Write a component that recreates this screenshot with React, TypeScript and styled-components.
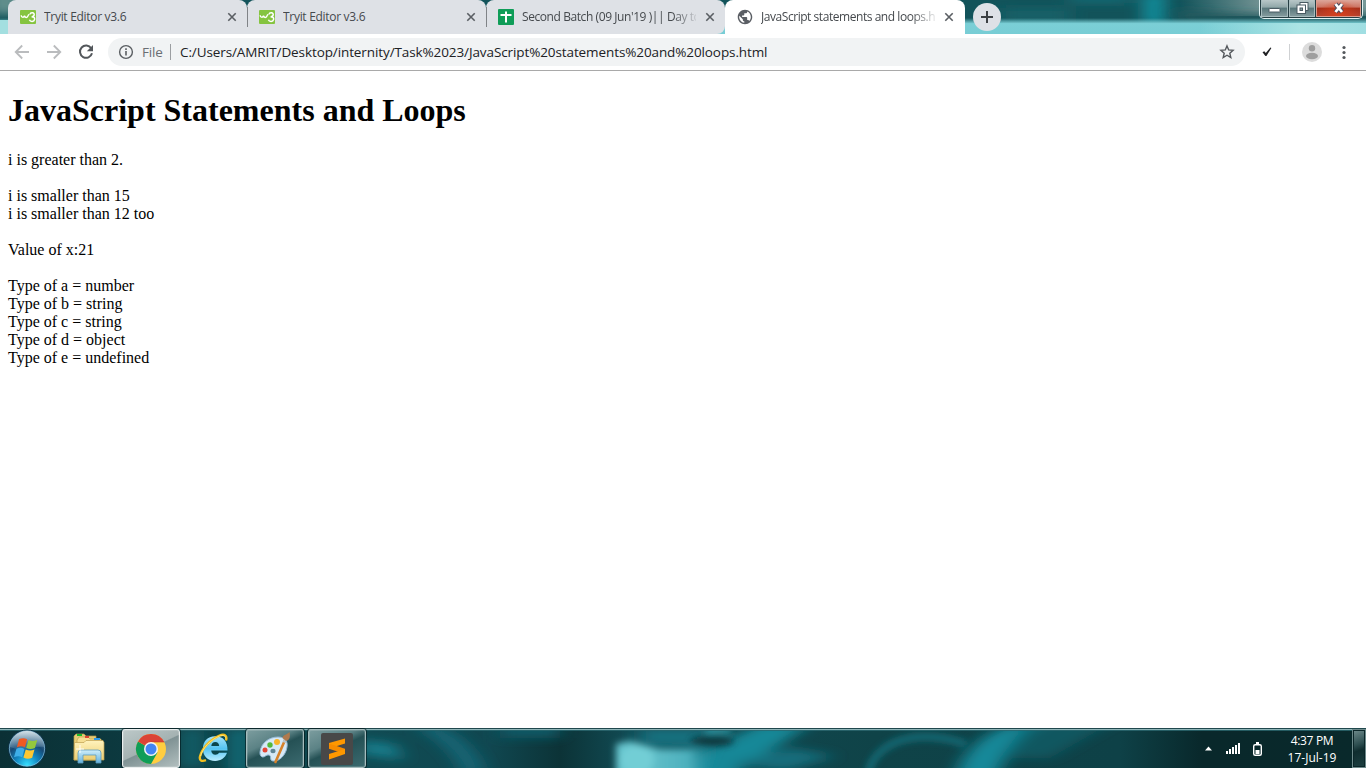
import React from 'react';
import styled, { createGlobalStyle, css } from 'styled-components';

const GlobalStyle = createGlobalStyle`
  * { box-sizing: border-box; }
  html, body { margin: 0; padding: 0; background: #fff; }
  body { overflow: hidden; }
  svg { display: block; flex: none; }
`;

const ui = css`
  font-family: 'Open Sans', 'Noto Sans', sans-serif;
`;

const Screen = styled.div`
  width: 1366px;
  height: 768px;
  display: flex;
  flex-direction: column;
  background: #fff;
  overflow: hidden;
`;

/* ---------- title bar and tabs ---------- */

const TitleBar = styled.header`
  position: relative;
  height: 34px;
  display: flex;
  align-items: flex-start;
  padding-left: 8px;
  background: #17585e;
  overflow: hidden;
`;

const Wallpaper = styled.svg`
  position: absolute;
  left: 0;
  top: 0;
`;

const Tab = styled.div<{ $active?: boolean; $last?: boolean; $line?: boolean }>`
  position: relative;
  width: 239px;
  height: 34px;
  display: flex;
  align-items: center;
  padding: 0 11px 0 12px;
  background: ${(p) => (p.$active ? '#fff' : '#dee1e6')};
  border-radius: ${(p) => (p.$last ? '8px 8px 8px 0' : '8px 8px 0 0')};
  ${(p) => p.$active && 'width: 240px; padding-right: 12px;'}
  ${(p) =>
    p.$line &&
    css`
      &::after {
        content: '';
        position: absolute;
        right: -1px;
        top: 7px;
        width: 1px;
        height: 20px;
        background: #808387;
        z-index: 1;
      }
    `}
`;

const TabUnder = styled.div<{ $c: string }>`
  display: flex;
  background: linear-gradient(transparent 50%, ${(p) => p.$c} 50%);
  position: relative;
`;

const TabTitle = styled.span<{ $fade?: boolean; $spacing: number }>`
  ${ui}
  flex: none;
  width: 174px;
  margin-left: 8px;
  margin-right: 9px;
  height: 18px;
  line-height: 18px;
  font-size: 12px;
  letter-spacing: ${(p) => p.$spacing}px;
  color: #45494d;
  white-space: nowrap;
  overflow: hidden;
  ${(p) => p.$fade && 'mask-image: linear-gradient(90deg, #000 150px, transparent 178px);'}
`;

const NewTab = styled.div`
  position: relative;
  width: 28px;
  height: 28px;
  margin: 3px 0 0 8px;
  border-radius: 50%;
  background: #dee1e6;
  display: grid;
  place-items: center;
`;

const WindowControls = styled.div`
  position: relative;
  display: flex;
  height: 19px;
  margin-left: auto;
  margin-right: 3px;
  border: 1px solid #dff1f2;
  border-top: 0;
  border-radius: 0 0 5px 5px;
  background: #263e43;
  padding: 0 1px 1px;
  gap: 1px;
`;

const Control = styled.div<{ $w: number; $close?: boolean }>`
  width: ${(p) => p.$w}px;
  display: grid;
  place-items: center;
  border: 1px solid ${(p) => (p.$close ? '#dc9b8d' : '#a7bcbe')};
  border-top: 0;
  background: ${(p) =>
    p.$close
      ? 'radial-gradient(ellipse at 50% 100%, #d8401c 0, transparent 70%), linear-gradient(#dda69a 0, #cc7463 45%, #a92f19 50%, #b5442f 100%)'
      : 'linear-gradient(#b8c7c8 0, #91a7a9 45%, #58767a 50%, #82999c 100%)'};
`;

/* ---------- toolbar ---------- */

const Toolbar = styled.div`
  height: 37px;
  flex: none;
  display: flex;
  align-items: center;
  border-bottom: 1px solid #a9a9a9;
  padding: 0 12px 0 12px;
  background: #fff;
`;

const NavGroup = styled.div`
  display: flex;
  gap: 12px;
  width: 96px;
`;

const AddressBar = styled.div`
  ${ui}
  flex: none;
  width: 1137px;
  height: 28px;
  border-radius: 14px;
  background: #f1f3f4;
  display: flex;
  align-items: center;
  padding: 0 8px 0 10px;
  line-height: 20px;
  white-space: nowrap;
`;

const Scheme = styled.span`
  width: 28px;
  margin-left: 8px;
  color: #6a6e73;
  font-size: 13.5px;
  letter-spacing: -0.2px;
`;

const Divider = styled.span<{ $c: string; $l: number; $r: number }>`
  width: 1px;
  height: 16px;
  margin: 0 ${(p) => p.$r}px 0 ${(p) => p.$l}px;
  background: ${(p) => p.$c};
`;

const Url = styled.span`
  flex: 1;
  color: #202124;
  font-size: 13.5px;
  letter-spacing: -0.1px;
`;

const Avatar = styled.div`
  width: 20px;
  height: 20px;
  border-radius: 50%;
  background: #dcdcdc;
  overflow: hidden;
`;

/* ---------- document ---------- */

const Page = styled.main`
  flex: 1;
  padding: 0 8px;
  font-family: 'Liberation Serif', 'Times New Roman', serif;
  font-size: 16px;
  line-height: 18px;
  color: #000;
`;

const Heading = styled.h1`
  margin: 21px 0 23px;
  font-size: 32px;
  line-height: 36px;
  font-weight: bold;
`;

const Paragraph = styled.div`
  margin-bottom: 18px;
`;

const Line = styled.div`
  height: 18px;
  white-space: nowrap;
`;

/* ---------- taskbar ---------- */

const Taskbar = styled.footer`
  position: relative;
  height: 40px;
  flex: none;
  display: flex;
  align-items: center;
  overflow: hidden;
  background: #0f4449;
`;

const Slot = styled.div<{ $w: number }>`
  position: relative;
  width: ${(p) => p.$w}px;
  height: 40px;
  display: grid;
  place-items: center;
`;

const TaskButton = styled.div<{ $active?: boolean }>`
  position: relative;
  width: 58px;
  height: 39px;
  margin: 1px 4px 0 0;
  display: grid;
  place-items: center;
  border-radius: 3px;
  border: 1px solid ${(p) => (p.$active ? '#e9eeee' : '#a5bcbd')};
  box-shadow: inset 0 0 0 1px rgba(255, 255, 255, 0.15), 0 0 0 1px rgba(0, 20, 24, 0.6);
  background: ${(p) =>
    p.$active
      ? 'linear-gradient(155deg, #bcc8c8 0, #a4b2b2 48%, #7f9294 50%, #b2bfbf 100%)'
      : 'linear-gradient(155deg, #7c9d9f 0, #5b8285 35%, #255155 50%, #3c6b70 100%)'};
`;

const Tray = styled.div`
  position: relative;
  margin-left: auto;
  display: flex;
  align-items: center;
  height: 40px;
`;

const TrayIcons = styled.svg`
  margin-right: 10px;
`;

const Clock = styled.div`
  ${ui}
  width: 80px;
  margin-top: 2px;
  text-align: center;
  color: #fff;
  font-size: 12px;
  line-height: 17px;
  letter-spacing: -0.35px;
`;

const LongDate = styled.div`
  letter-spacing: 0;
`;

const ShowDesktop = styled.div`
  width: 14px;
  height: 39px;
  margin-top: 1px;
  border: 1px solid #6e8a8b;
  box-shadow: inset 0 0 0 1px #0b2629;
  background: linear-gradient(160deg, #6f8b8c 0, #2c4d4f 40%, #102d2f 55%, #1d3f41 100%);
`;

/* ---------- icons ---------- */

const CloseX = () => (
  <svg width="10" height="10" viewBox="0 0 10 10">
    <path d="M1.300 1.300l7.400 7.400M8.700 1.300l-7.400 7.400" stroke="#5a5e63" strokeWidth="1.600" />
  </svg>
);

const W3Icon = () => (
  <svg width="16" height="14" viewBox="0 0 16 14">
    <rect width="16" height="14" rx="1" fill="#85c440" />
    <path d="M1.200 5.200c0 2.400 2.500 2.700 3.300.5.300 2.300 3 2.300 3.500.2.300-1.200.7-1.400 1.400-1.600" fill="none" stroke="#fff" strokeWidth="1.400" />
    <path d="M10 4.400c.6-2.500 4.700-2 4.200.6-.2 1.100-1.200 1.700-2.600 1.900 2.200-.4 3.300.8 3 2.500-.5 2.600-4.300 2.600-5.200.3" fill="none" stroke="#fff" strokeWidth="1.500" />
  </svg>
);

const SheetsIcon = () => (
  <svg width="16" height="16" viewBox="0 0 16 16">
    <rect width="16" height="16" rx="1" fill="#0f9d58" />
    <path d="M8 2.500v11M2.500 6h11" stroke="#fff" strokeWidth="2" />
  </svg>
);

const GlobeIcon = () => (
  <svg width="16" height="16" viewBox="1 1 22 22">
    <path
      fill="#5a5e64"
      d="M12 2C6.480 2 2 6.480 2 12s4.480 10 10 10 10-4.480 10-10S17.520 2 12 2zm-1 17.930c-3.950-.49-7-3.850-7-7.930 0-.62.08-1.210.21-1.790L9 15v1c0 1.100.9 2 2 2v1.930zm6.900-2.540c-.26-.81-1-1.390-1.900-1.390h-1v-3c0-.55-.45-1-1-1H8v-2h2c.55 0 1-.45 1-1V7h2c1.100 0 2-.9 2-2v-.41c2.930 1.190 5 4.060 5 7.410 0 2.080-.8 3.970-2.100 5.390z"
    />
  </svg>
);

const Arrow = ({ flip }: { flip?: boolean }) => (
  <svg width="20" height="20" viewBox="0 0 20 20">
    <g transform={flip ? 'translate(20 0) scale(-1 1)' : undefined} fill="none" stroke="#babcbe" strokeWidth="1.800">
      <path d="M17 10H4M10.200 3.500L3.700 10l6.500 6.500" />
    </g>
  </svg>
);

const Reload = () => (
  <svg width="20" height="20" viewBox="0 0 20 20">
    <path d="M15.200 6.300A6.100 6.100 0 1 0 16 11.300" fill="none" stroke="#53575b" strokeWidth="2" />
    <path d="M17 3v6.200h-6.200z" fill="#53575b" />
  </svg>
);

const InfoIcon = () => (
  <svg width="16" height="16" viewBox="0 0 16 16">
    <circle cx="8" cy="8" r="6.400" fill="none" stroke="#5a5e62" strokeWidth="1.400" />
    <path d="M8 7v4.500M8 4.300v1.600" stroke="#5a5e62" strokeWidth="1.600" />
  </svg>
);

const Star = () => (
  <svg width="20" height="20" viewBox="0 0 20 20">
    <path d="M10 3.900l1.700 4 4.400.4-3.300 2.900 1 4.300-3.800-2.300-3.800 2.300 1-4.300-3.300-2.900 4.400-.4z" fill="none" stroke="#54585c" strokeWidth="1.400" />
  </svg>
);

const Check = () => (
  <svg width="12" height="12" viewBox="0 0 12 12">
    <path d="M1.500 6.200l1.800-.9 1.500 1.800L9.400 1.600l1 .5L5.400 10h-1z" fill="#202124" />
  </svg>
);

const StartOrb = () => (
  <svg width="40" height="40" viewBox="0 0 40 40">
    <defs>
      <radialGradient id="orb" cx=".5" cy=".95" r=".9">
        <stop offset="0" stopColor="#36e0ff" />
        <stop offset=".35" stopColor="#1287c2" />
        <stop offset=".65" stopColor="#174a76" />
        <stop offset="1" stopColor="#7895a8" />
      </radialGradient>
      <linearGradient id="gloss" x1="0" y1="0" x2="0" y2="1">
        <stop offset="0" stopColor="#e3edf2" stopOpacity=".85" />
        <stop offset="1" stopColor="#7ca1b8" stopOpacity=".25" />
      </linearGradient>
    </defs>
    <circle cx="20" cy="20.500" r="18.500" fill="url(#orb)" stroke="#0b3046" />
    <circle cx="20" cy="20.500" r="17.600" fill="none" stroke="#84bfd8" strokeOpacity=".7" />
    <path d="M3 19a17 16 0 0 1 34 0c-9-2-22 5-34 0z" fill="url(#gloss)" />
    <g transform="translate(-2.300 -2.500) scale(1.150)">
      <path d="M12.500 11.800c3-1.300 5-.9 7 .2l-1.900 7c-2.200-1.100-4.300-1.300-7 0z" fill="#f05a22" />
      <path d="M20.700 12.600c2.500 1.200 5 1.100 7.600-.1l-2 7c-2.800 1.200-5 1.200-7.600.1z" fill="#94c83d" />
      <path d="M10.200 20.300c2.700-1.300 4.800-1 7 .1l-2 7.200c-2.400-1.300-4.500-1.200-7.100 0z" fill="#3eaee8" />
      <path d="M18.300 20.900c2.600 1.200 5 1.100 7.600 0l-2 7.200c-2.700 1.200-5.200 1.100-7.600-.2z" fill="#fdc733" />
    </g>
  </svg>
);

const ExplorerIcon = () => (
  <svg width="34" height="32" viewBox="0 0 34 32">
    <defs>
      <linearGradient id="fold" x1="0" y1="0" x2="0" y2="1">
        <stop offset="0" stopColor="#fff3bd" />
        <stop offset="1" stopColor="#ecce72" />
      </linearGradient>
      <linearGradient id="stand" x1="0" y1="0" x2="0" y2="1">
        <stop offset="0" stopColor="#d1effa" />
        <stop offset="1" stopColor="#62b0dc" />
      </linearGradient>
    </defs>
    <path d="M3 28V4l2-2h8l2 2h10v24z" fill="#e7cc77" stroke="#b99844" strokeWidth=".7" />
    <path d="M6 28V8l2-3h9l2 2h11v21z" fill="#f6df93" stroke="#c3a34f" strokeWidth=".7" />
    <path d="M3 28l.5-17.500H13l2-2h17l1 2V28z" fill="url(#fold)" stroke="#bea152" strokeWidth=".7" />
    <rect x="6" y="2" width="5" height="2" fill="#19b929" />
    <rect x="14" y="4" width="4" height="2" fill="#dc4632" />
    <rect x="23" y="6" width="6" height="2" fill="#2f99e8" />
    <path d="M7 31V21q0-3 3-3h17q3 0 3 3v10h-5v-8H12v8z" fill="url(#stand)" stroke="#5e9cbe" strokeWidth=".8" />
    <path d="M9 13v8M5 17h8" stroke="#fff" strokeWidth=".9" />
  </svg>
);

const ChromeIcon = () => (
  <svg width="32" height="32" viewBox="0 0 32 32">
    <circle cx="16" cy="16" r="15" fill="#ffcd40" />
    <path d="M16 16L3 8.500A15 15 0 0 0 16 31l6.500-11.500z" fill="#0f9d58" />
    <path d="M16 16L3 8.500A15 15 0 0 1 29.200 9H16z" fill="#db4437" />
    <path d="M16 9h13.200" stroke="#c13a2e" strokeWidth=".6" />
    <circle cx="16" cy="16" r="7" fill="#f3f3f3" />
    <circle cx="16" cy="16" r="5.500" fill="#4285f4" />
  </svg>
);

const IeIcon = () => (
  <svg width="34" height="34" viewBox="1 1 34 34">
    <defs>
      <linearGradient id="ie" x1="0" y1="0" x2="0" y2="1">
        <stop offset="0" stopColor="#a5e3fb" />
        <stop offset=".5" stopColor="#55c4f2" />
        <stop offset="1" stopColor="#b8ecff" />
      </linearGradient>
    </defs>
    <path d="M30.500 20.500H14.200c.2 2.600 1.700 4.200 4.200 4.200 1.700 0 2.900-.6 3.700-1.900h7.900c-1.700 5.200-6.200 8.100-11.800 8.100-7.700 0-12.300-5-12.300-12.200S10.600 6.300 18 6.300c8.300 0 12.800 5.200 12.500 14.200zM14.300 15.900h7.900c-.2-2.500-1.600-3.900-3.900-3.900s-3.700 1.400-4 3.900z" fill="url(#ie)" />
    <path d="M29 10.500c1.500-5-1.500-7-6.500-5C13 9.500 5 18.500 3 26.500c-.9 4 1.500 5.300 6 3.700" fill="none" stroke="#f3bf1e" strokeWidth="2.400" />
    <path d="M28.700 8.500c.2-3-2.700-3.500-5.900-2.500C14 9.500 5.500 18 3.600 26" fill="none" stroke="#ffe784" strokeWidth=".9" />
  </svg>
);

const PaintIcon = () => (
  <svg width="34" height="34" viewBox="1 1 34 34">
    <path d="M3 21C4 12 12 6 21 6c7 0 10 4 9 10-1 8-8 15-14 14-4-.5-1-5-4-6-3-.7-4 2.500-6.500 2-2-.4-2.800-2.500-2.500-5z" fill="#d6e9f6" stroke="#93b8d4" />
    <ellipse cx="16" cy="20" rx="2.600" ry="2.200" fill="#5f8595" />
    <circle cx="8" cy="19" r="2.500" fill="#e34635" />
    <circle cx="13" cy="14" r="2.700" fill="#54b83c" />
    <circle cx="20" cy="11" r="3" fill="#f8b42b" />
    <path d="M28 9L18.500 31" stroke="#d6822c" strokeWidth="2.600" strokeLinecap="round" />
    <path d="M28.400 8L27 11.500" stroke="#b9c4cb" strokeWidth="3" />
    <path d="M25.500 7c0-3 4-3 7-6 .8 4 .8 8-3.500 9z" fill="#b07a4e" />
  </svg>
);

const SublimeIcon = () => (
  <svg width="32" height="32" viewBox="0 0 32 32">
    <rect width="32" height="32" rx="2" fill="#484848" />
    <path d="M8 10l16-4.500v5L8 15.500z" fill="#ff9800" />
    <path d="M8 10.500l16 5.300v5.200L8 15.800z" fill="#f78c00" />
    <path d="M8 21l16-5v5L8 26.500z" fill="#ff9800" />
  </svg>
);

const TitleWallpaper = () => (
  <Wallpaper width="1366" height="34" viewBox="0 0 1366 34">
    <defs>
      <filter id="tb" filterUnits="userSpaceOnUse" x="-60" y="-60" width="1486" height="150">
        <feGaussianBlur stdDeviation="9 4" />
      </filter>
      <linearGradient id="band" x1="0" y1="0" x2="0" y2="1">
        <stop offset="0" stopColor="#7bcfd6" stopOpacity="0" />
        <stop offset=".35" stopColor="#7bcfd6" />
        <stop offset="1" stopColor="#78cdd5" />
      </linearGradient>
      <linearGradient id="pale" x1="0" y1="0" x2="1" y2="0">
        <stop offset="0" stopColor="#b0e6e6" stopOpacity="0" />
        <stop offset=".6" stopColor="#b0e6e6" stopOpacity=".9" />
        <stop offset="1" stopColor="#a0dee2" />
      </linearGradient>
      <linearGradient id="grey" x1="0" y1="0" x2="1" y2="0">
        <stop offset="0" stopColor="#86a09f" stopOpacity="0" />
        <stop offset=".45" stopColor="#86a09f" />
        <stop offset="1" stopColor="#8aa5a3" />
      </linearGradient>
    </defs>
    <rect width="1366" height="34" fill="#12535a" />
    <g filter="url(#tb)">
      <rect x="1000" y="8" width="70" height="14" fill="#136068" />
      <rect x="1144" y="-6" width="20" height="30" fill="#1792a0" />
      <rect x="1070" y="-6" width="60" height="9" fill="#136b75" />
      <rect x="-10" y="-10" width="30" height="24" fill="#669390" />
    </g>
    <rect x="1180" width="186" height="16" fill="url(#grey)" opacity=".85" />
    <g filter="url(#tb)">
      <path d="M1170 10l70 4h160v10h-210z" fill="#24595d" />
    </g>
    <rect y="18" width="1366" height="16" fill="url(#band)" />
    <rect x="1200" y="23" width="166" height="11" fill="url(#pale)" />
    <rect y="20" width="8" height="14" fill="#a3dfe0" />
  </Wallpaper>
);

const TaskWallpaper = () => (
  <Wallpaper width="1366" height="40" viewBox="0 0 1366 40">
    <defs>
      <filter id="b1" filterUnits="userSpaceOnUse" x="-50" y="-50" width="1466" height="140">
        <feGaussianBlur stdDeviation="9 5" />
      </filter>
      <filter id="b2" filterUnits="userSpaceOnUse" x="-50" y="-50" width="1466" height="140">
        <feGaussianBlur stdDeviation="3.500" />
      </filter>
      <linearGradient id="glow" x1="0" y1="0" x2="1" y2="0">
        <stop offset="0" stopColor="#66c5ce" />
        <stop offset=".35" stopColor="#60bec8" />
        <stop offset=".7" stopColor="#4cb0bd" />
        <stop offset="1" stopColor="#138898" stopOpacity="0" />
      </linearGradient>
      <linearGradient id="base" x1="0" y1="0" x2="1" y2="0">
        <stop offset="0" stopColor="#0b3035" />
        <stop offset=".1" stopColor="#0c3a40" />
        <stop offset=".27" stopColor="#104b53" />
        <stop offset=".36" stopColor="#104750" />
        <stop offset=".41" stopColor="#0c3337" />
        <stop offset=".46" stopColor="#114b54" />
        <stop offset=".64" stopColor="#0f4348" />
        <stop offset=".82" stopColor="#0e4147" />
        <stop offset=".88" stopColor="#09282b" />
        <stop offset="1" stopColor="#09292b" />
      </linearGradient>
    </defs>
    <rect width="1366" height="40" fill="url(#base)" />
    <g filter="url(#b1)">
      <rect x="180" y="0" width="24" height="40" fill="#116b75" opacity=".7" />
      <rect x="228" y="0" width="22" height="45" fill="#12737f" opacity=".8" />
      <path d="M360 12l35 4 8 16-43-6z" fill="#177b8a" />
      <path d="M430-5c28 8 48 27 55 50h-24c-4-18-22-32-44-46z" fill="#126676" />
      <path d="M500-8h60v18h-60z" fill="#105865" />
      <path d="M640 0h80l-15 20-65-2z" fill="#12707e" />
      <path d="M690 30l70-34h50l-80 54h-60z" fill="#138898" />
      <path d="M730 36l60-16 45 8-50 15z" fill="#126d7b" />
      <path d="M955 50c8-30 35-50 65-55h30c-22 8-43 28-55 55z" fill="#14899a" />
      <path d="M1030-10h90l-70 40h-50z" fill="#10606b" opacity=".7" />
    </g>
    <g filter="url(#b2)">
      <path d="M616 16l14-3 30 8 60 0-16 28h-88z" fill="url(#glow)" />
      <ellipse cx="637" cy="32" rx="17" ry="15" fill="#72ced5" />
      <ellipse cx="712" cy="13" rx="22" ry="5" fill="#0b373c" />
      <path d="M868 45c7-29 44-47 98-29" fill="none" stroke="#13717e" strokeWidth="6" />
      <path d="M706 2h25" stroke="#39a8b5" strokeWidth="5" />
    </g>
    <rect width="1366" height="1" fill="#20484d" />
    <rect y="1" width="1366" height="1" fill="#8eb5b8" />
    <rect y="2" width="1366" height="1" fill="#2c686f" opacity=".8" />
  </Wallpaper>
);

const tabs = [
  { title: 'Tryit Editor v3.6', icon: <W3Icon />, line: true, spacing: -0.3 },
  { title: 'Tryit Editor v3.6', icon: <W3Icon />, line: true, spacing: -0.3 },
  { title: "Second Batch (09 Jun'19 )|| Day to day", icon: <SheetsIcon />, fade: true, last: true, spacing: -0.42 },
  { title: 'JavaScript statements and loops.html', icon: <GlobeIcon />, fade: true, active: true, spacing: -0.45 },
];

const paragraphs = [
  ['i is greater than 2.'],
  ['i is smaller than 15', 'i is smaller than 12 too'],
  ['Value of x:21'],
  ['Type of a = number', 'Type of b = string', 'Type of c = string', 'Type of d = object', 'Type of e = undefined'],
];

export default function App() {
  return (
    <Screen>
      <GlobalStyle />
      <TitleBar>
        <TitleWallpaper />
        {tabs.map((t, i) => (
          <TabUnder key={i} $c={t.active || t.last ? 'transparent' : '#dee1e6'}>
            <Tab $active={t.active} $last={t.last} $line={t.line}>
              {t.icon}
              <TabTitle $fade={t.fade} $spacing={t.spacing}>{t.title}</TabTitle>
              <CloseX />
            </Tab>
          </TabUnder>
        ))}
        <NewTab>
          <svg width="14" height="14" viewBox="0 0 14 14">
            <path d="M7 1v12M1 7h12" stroke="#3c4043" strokeWidth="2" />
          </svg>
        </NewTab>
        <WindowControls>
          <Control $w={27}>
            <svg width="13" height="16" viewBox="0 0 13 16">
              <rect x="1" y="8.500" width="11" height="3.500" rx=".5" fill="#fff" stroke="#4b5c64" />
            </svg>
          </Control>
          <Control $w={26}>
            <svg width="13" height="16" viewBox="0 0 13 16">
              <rect x="4" y="2.500" width="8" height="8" fill="#fff" stroke="#4b5c64" />
              <rect x="1" y="5" width="8.500" height="8.500" fill="#fff" stroke="#4b5c64" />
              <rect x="4" y="8" width="2.500" height="2.500" fill="#8ca0a3" stroke="#4b5c64" />
            </svg>
          </Control>
          <Control $w={45} $close>
            <svg width="14" height="16" viewBox="0 0 14 16">
              <path d="M3.500 4l6.500 8M10 4l-6.500 8" stroke="#4e4b5c" strokeWidth="4.600" />
              <path d="M3.500 4l6.500 8M10 4l-6.500 8" stroke="#fff" strokeWidth="2.700" />
            </svg>
          </Control>
        </WindowControls>
      </TitleBar>

      <Toolbar>
        <NavGroup>
          <Arrow />
          <Arrow flip />
          <Reload />
        </NavGroup>
        <AddressBar>
          <InfoIcon />
          <Scheme>File</Scheme>
          <Divider $c="#9b9ea1" $l={0} $r={9} />
          <Url>C:/Users/AMRIT/Desktop/internity/Task%2023/JavaScript%20statements%20and%20loops.html</Url>
          <Star />
        </AddressBar>
        <Divider as="div" $c="transparent" $l={0} $r={15} />
        <Check />
        <Divider $c="#cfd1d3" $l={16} $r={12} />
        <Avatar>
          <svg width="20" height="20" viewBox="0 0 20 20">
            <circle cx="10" cy="6.300" r="3.200" fill="#9e9e9e" />
            <ellipse cx="10" cy="14" rx="6" ry="3.300" fill="#9e9e9e" />
          </svg>
        </Avatar>
        <Divider as="div" $c="transparent" $l={0} $r={16} />
        <svg width="10" height="16" viewBox="0 0 10 16">
          <circle cx="5" cy="3.500" r="1.600" fill="#54585c" />
          <circle cx="5" cy="8.500" r="1.600" fill="#54585c" />
          <circle cx="5" cy="13.500" r="1.600" fill="#54585c" />
        </svg>
      </Toolbar>

      <Page>
        <Heading>JavaScript Statements and Loops</Heading>
        {paragraphs.map((lines, i) => (
          <Paragraph key={i}>
            {lines.map((l) => (
              <Line key={l}>{l}</Line>
            ))}
          </Paragraph>
        ))}
      </Page>

      <Taskbar>
        <TaskWallpaper />
        <Slot $w={54}><StartOrb /></Slot>
        <Slot $w={68}><ExplorerIcon /></Slot>
        <TaskButton $active><ChromeIcon /></TaskButton>
        <Slot $w={62}><IeIcon /></Slot>
        <TaskButton><PaintIcon /></TaskButton>
        <TaskButton><SublimeIcon /></TaskButton>
        <Tray>
          <TrayIcons width="66" height="40" viewBox="0 0 66 40">
            <path d="M9 22.500l3.500-4 3.500 4z" fill="#fff" />
            <g fill="#fff">
              <rect x="30" y="23" width="2" height="3" />
              <rect x="33" y="21" width="2" height="5" />
              <rect x="36" y="19" width="2" height="7" />
              <rect x="39" y="17" width="2" height="9" />
              <rect x="42" y="15" width="2" height="11" />
            </g>
            <rect x="60" y="14" width="3" height="2" fill="#fff" />
            <rect x="57.700" y="16.700" width="7.600" height="10.600" rx="1.500" fill="none" stroke="#fff" strokeWidth="1.400" />
            <rect x="59.500" y="22" width="4" height="4" fill="#fff" />
          </TrayIcons>
          <Clock>
            <div>4:37 PM</div>
            <LongDate>17-Jul-19</LongDate>
          </Clock>
          <ShowDesktop />
        </Tray>
      </Taskbar>
    </Screen>
  );
}
